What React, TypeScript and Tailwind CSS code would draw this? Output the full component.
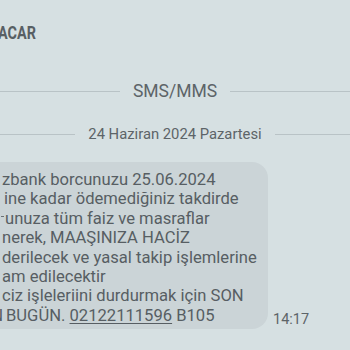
const lines = [
  { pad: 'pl-[2px]', text: 'zbank borcunuzu 25.06.2024' },
  { pad: 'pl-[4px]', text: 'ine kadar ödemediğiniz takdirde' },
  { pad: 'pl-[1px]', text: 'unuza tüm faiz ve masraflar' },
  { pad: 'pl-[2px]', text: 'nerek, MAAŞINIZA HACİZ' },
  { pad: 'pl-[2px]', text: 'derilecek ve yasal takip işlemlerine' },
  { pad: 'pl-[2px]', text: 'am edilecektir' },
  { pad: 'pl-[2px]', text: 'ciz işleleriini durdurmak için SON' },
];

export default function App() {
  return (
    <div className="w-[350px] h-[350px] overflow-hidden bg-[#d6e0e2] font-['Roboto',sans-serif] text-[#575e63]">
      <div className="h-[64px] flex items-center">
        <span className="inline-block origin-left scale-x-[0.8] -ml-[2px] text-[18px] font-bold text-[#585f64]">ACAR</span>
      </div>

      <div className="mt-[15px] flex items-center gap-[13px]">
        <div className="flex-1 h-px bg-[#b9c3c6]" />
        <span className="text-[17.5px] leading-[24px] text-[#5d6468]">SMS/MMS</span>
        <div className="flex-1 h-px bg-[#b9c3c6]" />
      </div>

      <div className="mt-[20px] flex items-center gap-[13px]">
        <div className="flex-1 h-px bg-[#b9c3c6]" />
        <span className="text-[14.8px] leading-[22px] text-[#5d6468]">24 Haziran 2024 Pazartesi</span>
        <div className="flex-1 h-px bg-[#b9c3c6]" />
      </div>

      <div className="mt-[17px] flex items-end">
        <div className="w-[268px] overflow-hidden rounded-r-[16px] bg-[#cbd4d7] pt-[8px] pb-[4px] text-[16.6px] leading-[19.4px]">
          {lines.map((l, i) => (
            <div key={i} className={`whitespace-pre ${l.pad}`}>
              {i === 2 && <span className="inline-block w-[3px] h-px mr-px mb-[6px] bg-[#6a7176] align-middle" />}
              {l.text}
            </div>
          ))}
          <div className="whitespace-pre flex items-baseline">
            <span className="inline-block w-[3px] overflow-hidden" dir="rtl">N</span>
            <span className="ml-[3px]">BUGÜN. </span>
            <span className="underline underline-offset-2">02122111596</span>
            <span> B105</span>
          </div>
        </div>
        <span className="ml-[5px] text-[14.5px] leading-[18px] text-[#5d6468]">14:17</span>
      </div>
    </div>
  );
}
